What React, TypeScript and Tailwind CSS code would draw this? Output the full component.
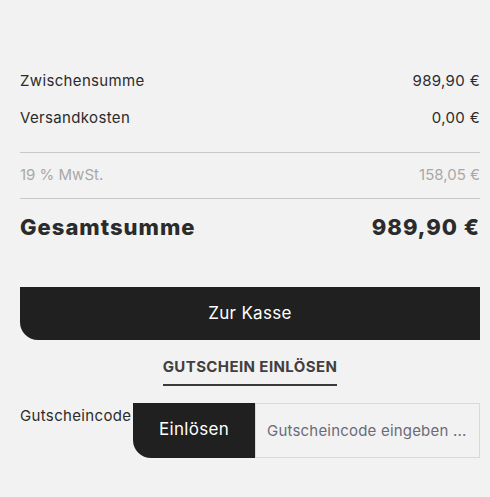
const font = { fontFamily: "Inter, 'Noto Sans', sans-serif" };

function Row({ label, value, className }: { label: string; value: string; className: string }) {
  return (
    <div className={`flex items-center justify-between ${className}`}>
      <span>{label}</span>
      <span>{value}</span>
    </div>
  );
}

export default function App() {
  return (
    <div className="min-h-[497px] w-[490px] bg-[#f2f2f2] text-[#2b2b2b]" style={font}>
      <div className="pl-5 pr-[10px] pt-[69px]">
        {/* Summen */}
        <Row label="Zwischensumme" value="989,90 €" className="h-6 text-[15px] tracking-[0.35px]" />
        <Row label="Versandkosten" value="0,00 €" className="mt-[13px] h-6 text-[15px] tracking-[0.35px]" />
        <div className="mt-[22px] border-t border-[#c8c8c8]" />
        <Row label="19 % MwSt." value="158,05 €" className="mt-[10px] h-6 text-[15px] tracking-[0px] text-[#a8a8a8]" />
        <div className="mt-[11px] border-t border-[#c8c8c8]" />
        <Row label="Gesamtsumme" value="989,90 €" className="mt-[14px] h-7 text-[22px] font-extrabold tracking-[1px]" />

        {/* Kasse */}
        <button className="mt-[46px] flex h-[53px] w-full items-center justify-center rounded-bl-[18px] bg-[#202020] text-[17px] tracking-[0.3px] text-white">
          Zur Kasse
        </button>

        <div className="mt-[16px] flex justify-center">
          <span className="border-b-2 border-[#3a3a3a] pb-[5px] text-[15px] font-bold tracking-[0.4px] text-[#404040]">
            GUTSCHEIN EINLÖSEN
          </span>
        </div>

        {/* Gutschein */}
        <div className="mt-[17px] flex items-start">
          <label className="w-[113px] shrink-0 whitespace-nowrap pt-[2px] text-[15px] tracking-[0.35px]">
            Gutscheincode
          </label>
          <button className="relative flex h-[55px] w-[122px] shrink-0 items-center justify-center rounded-bl-[18px] bg-[#202020] text-[17px] tracking-[0.3px] text-white">
            Einlösen
          </button>
          <input
            className="h-[55px] min-w-0 flex-1 border border-[#d9d9d9] px-[11px] text-[15px] tracking-[0.2px] text-[#2b2b2b] outline-none placeholder:text-[#6b6b78]"
            placeholder="Gutscheincode eingeben ..."
          />
        </div>
      </div>
    </div>
  );
}
